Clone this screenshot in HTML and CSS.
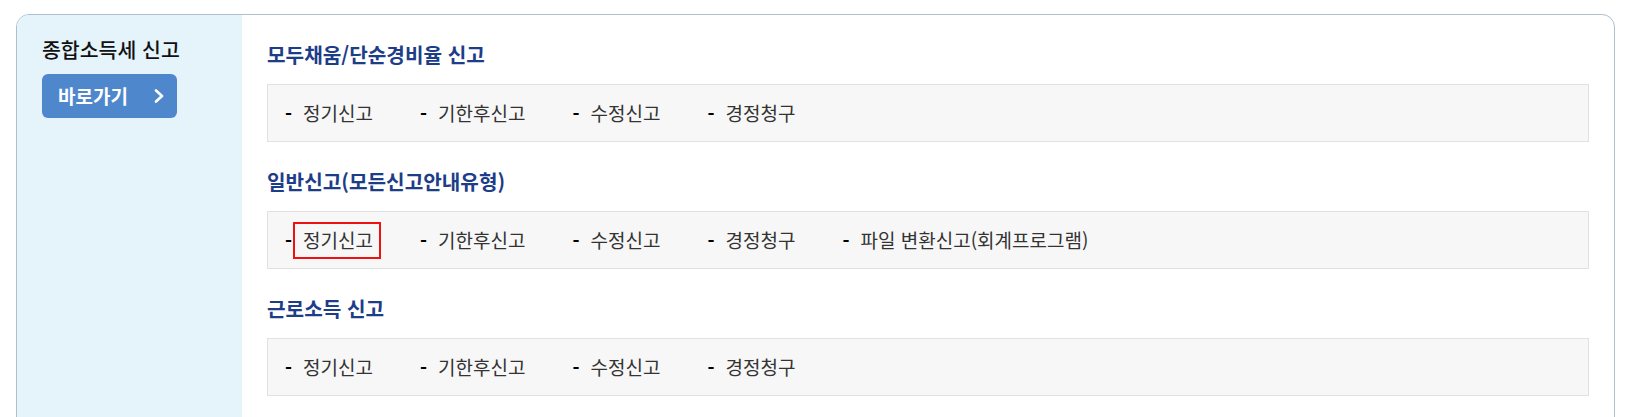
FILE: index.html
```html
<!DOCTYPE html>
<html lang="ko">
<head>
<meta charset="utf-8">
<title>종합소득세 신고</title>
<link rel="stylesheet" href="styles.css">
</head>
<body>
<div class="wrap">
  <div class="panel">
    <aside class="side">
      <h2 class="side-title">종합소득세 신고</h2>
      <a class="go-btn" href="#">
        <span>바로가기</span>
        <svg class="chev" width="12" height="14" viewBox="0 0 12 14"><polyline points="3,1.5 9,7 3,12.5" fill="none" stroke="#fff" stroke-width="2.6" stroke-linecap="round" stroke-linejoin="round"/></svg>
      </a>
    </aside>
    <main class="content">
      <section class="sec">
        <h3 class="sec-title">모두채움/단순경비율 신고</h3>
        <ul class="links">
          <li><a href="#">정기신고</a></li>
          <li><a href="#">기한후신고</a></li>
          <li><a href="#">수정신고</a></li>
          <li><a href="#">경정청구</a></li>
        </ul>
      </section>
      <section class="sec">
        <h3 class="sec-title">일반신고(모든신고안내유형)</h3>
        <ul class="links">
          <li><a href="#" class="hl">정기신고</a></li>
          <li><a href="#">기한후신고</a></li>
          <li><a href="#">수정신고</a></li>
          <li><a href="#">경정청구</a></li>
          <li><a href="#">파일 변환신고(회계프로그램)</a></li>
        </ul>
      </section>
      <section class="sec">
        <h3 class="sec-title">근로소득 신고</h3>
        <ul class="links">
          <li><a href="#">정기신고</a></li>
          <li><a href="#">기한후신고</a></li>
          <li><a href="#">수정신고</a></li>
          <li><a href="#">경정청구</a></li>
        </ul>
      </section>
    </main>
  </div>
</div>
</body>
</html>
```
FILE: styles.css
```css
* { box-sizing: border-box; }
html, body { margin: 0; padding: 0; background: #fff; }
body {
  font-family: "Noto Sans CJK KR", "Noto Sans", sans-serif;
  color: #333;
}
.wrap {
  padding: 14px 19px 0 16px;
}
.panel {
  display: flex;
  border: 1px solid #aebfcd;
  border-radius: 13px;
  overflow: hidden;
  min-height: 440px;
}
.side {
  width: 225px;
  flex: none;
  background: #e5f3fb;
  padding: 20px 25px;
}
.side-title {
  margin: 0;
  font-size: 20.5px;
  line-height: 28px;
  font-weight: 500;
  color: #111;
}
.go-btn {
  margin-top: 11px;
  display: flex;
  align-items: center;
  justify-content: space-between;
  width: 135px;
  height: 44px;
  padding: 0 12px 0 16px;
  background: #4f87cd;
  border-radius: 6px;
  color: #fff;
  text-decoration: none;
  font-size: 19px;
  font-weight: 700;
}
.go-btn span { line-height: 1; margin-top: -2px; }
.chev { display: block; }
.content {
  flex: 1;
  padding: 27px 25px 28px;
}
.sec + .sec { margin-top: 27px; }
.sec-title {
  margin: 0;
  font-size: 20.2px;
  line-height: 26px;
  font-weight: 700;
  color: #1d3d88;
}
.links {
  list-style: none;
  margin: 16px 0 0;
  padding: 0 17px;
  height: 58px;
  display: flex;
  align-items: center;
  gap: 47px;
  background: #f7f7f7;
  border: 1px solid #e1e1e1;
}
.links li {
  font-size: 19px;
  line-height: 26px;
  display: flex;
  align-items: center;
}
.links li::before {
  content: "-";
  font-weight: 700;
  color: #000;
  margin-right: 11px;
}
.links a {
  color: #333;
  text-decoration: none;
}
.links a.hl {
  outline: 2px solid #ee1111;
  outline-offset: 0;
  padding: 3px 6px 4px 8px;
  margin: -3px -6px -4px -8px;
}
```
